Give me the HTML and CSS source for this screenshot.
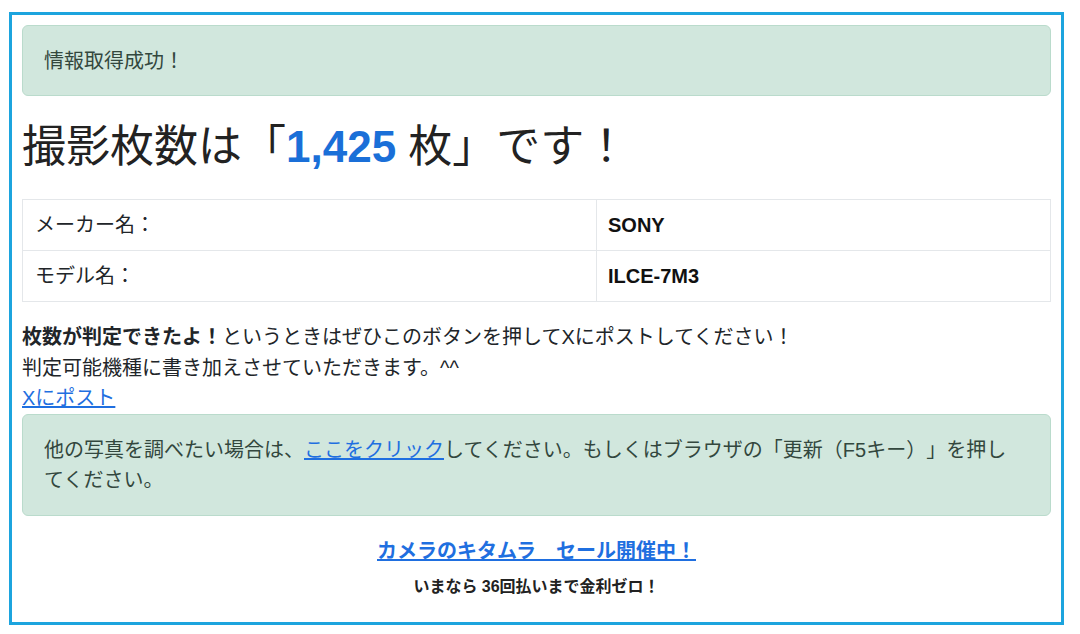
FILE: index.html
```html
<!DOCTYPE html>
<html lang="ja">
<head>
<meta charset="utf-8">
<title>撮影枚数</title>
<link rel="stylesheet" href="styles.css">
</head>
<body>
<div class="frame">
  <div class="alert alert-top">情報取得成功！</div>
  <h1 class="headline">撮影枚数は「<span class="count">1,425</span> 枚」です！</h1>
  <table class="info">
    <tr><td class="label">メーカー名：</td><td class="value">SONY</td></tr>
    <tr><td class="label">モデル名：</td><td class="value">ILCE-7M3</td></tr>
  </table>
  <p class="note"><strong>枚数が判定できたよ！</strong>というときはぜひこのボタンを押してXにポストしてください！<br>判定可能機種に書き加えさせていただきます。^^<br><a href="#" class="link">Xにポスト</a></p>
  <div class="alert alert-retry">他の写真を調べたい場合は、<a href="#" class="link">ここをクリック</a>してください。もしくはブラウザの「更新（F5キー）」を押してください。</div>
  <div class="promo">
    <a href="#" class="link promo-link">カメラのキタムラ　セール開催中！</a>
    <p class="promo-sub">いまなら 36回払いまで金利ゼロ！</p>
  </div>
</div>
</body>
</html>
```

FILE: styles.css
```css
* { box-sizing: border-box; }
html, body { margin: 0; padding: 0; background: #ffffff; }
body {
  font-family: "Liberation Sans", "Noto Sans CJK JP", sans-serif;
  font-size: 20px;
  line-height: 30px;
  color: #212529;
  text-spacing-trim: space-all;
}
.frame {
  margin: 12px 0 0 9px;
  width: 1055px;
  border: 3px solid #1ca4de;
  padding: 10px 10px 10px 10px;
}
.alert {
  background: #d1e7dd;
  border: 1px solid #badbcc;
  border-radius: 6px;
  color: #33473e;
}
.alert-top {
  padding: 20px 21px 19px;
}
.headline {
  margin: 24px 0 26px;
  font-size: 44px;
  line-height: 53px;
  font-weight: 400;
  color: #222;
}
.count {
  color: #1a6fd8;
  font-weight: 700;
}
.info {
  width: 100%;
  border-collapse: collapse;
}
.info td {
  border: 1px solid #e4e7ea;
  height: 51px;
  padding: 0 12px;
  vertical-align: middle;
}
.info .label { width: 574px; }
.info .value { font-weight: 700; padding-left: 11px; color: #111; }
.note {
  margin: 20px 0 0;
  line-height: 30.5px;
}
.note strong { font-weight: 700; }
.link { color: #1f6fe0; text-decoration: underline; }
.alert-retry {
  padding: 20px 30px 20px 21px;
}
.promo {
  text-align: center;
  padding: 20px 0 13px;
}
.promo-link {
  font-weight: 700;
  display: inline-block;
}
.promo-sub {
  margin: 9px 0 0;
  font-size: 16px;
  line-height: 24px;
  font-weight: 700;
  color: #222;
}
```
